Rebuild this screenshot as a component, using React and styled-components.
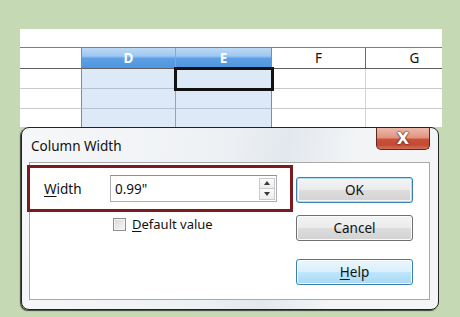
import React from 'react'
import styled, { createGlobalStyle } from 'styled-components'

const GlobalStyle = createGlobalStyle`
  html, body {
    margin: 0;
    padding: 0;
    background: #c5d9b4;
  }
  * { box-sizing: border-box; }
`

const Page = styled.div`
  width: 460px;
  height: 317px;
  padding-top: 29px;
  overflow: hidden;
  background: #c5d9b4;
  font-family: "Noto Sans", "DejaVu Sans", sans-serif;
`

const Sheet = styled.div`
  margin-left: 20px;
  width: 422px;
  height: 98px;
  overflow: hidden;
  background: #fff;
`

const TopBand = styled.div`
  height: 19px;
  border-bottom: 1px solid #7d7d7d;
`

const Grid = styled.div`
  display: grid;
  grid-template-columns: 62px 94px 96px 94px 98px;
  width: 444px;
`

const HeadCell = styled.div`
  height: 21px;
  display: flex;
  align-items: center;
  justify-content: center;
  font-family: "Noto Sans", sans-serif;
  font-size: 13.5px;
  border-bottom: 1px solid #5f5f5f;
  border-right: 1px solid ${p => p.$edge || '#8c8c8c'};
  color: ${p => p.$selected ? '#fff' : '#111'};
  font-weight: ${p => p.$selected ? 700 : 400};
  background: ${p => p.$selected
    ? 'linear-gradient(#bcdaf6 0%, #9ec8f0 40%, #5d9fe4 52%, #4f96df 100%)'
    : '#fff'};
`

const Cell = styled.div`
  height: 20px;
  border-bottom: 1px solid ${p => p.$selected ? '#b4c3d4' : '#cacaca'};
  border-right: 1px solid ${p => p.$edge || '#d4d4d4'};
  background: ${p => p.$selected ? '#dde9f7' : '#fff'};
  position: ${p => p.$active ? 'relative' : 'static'};
  z-index: ${p => p.$active ? 1 : 'auto'};
  outline: ${p => p.$active ? '3px solid #121212' : 'none'};
  outline-offset: -1px;
`

const Dialog = styled.div`
  margin-left: 21px;
  width: 418px;
  height: 183px;
  border: 1px solid #222;
  border-radius: 8px;
  box-shadow: -1px 1px 1px rgba(0, 0, 0, 0.7);
  background: linear-gradient(100deg, #f6f7f9 0%, #eef1f4 45%, #e3e8ee 60%, #f2f4f6 75%, #f4f5f7 100%);
  display: flex;
  flex-direction: column;
`

const TitleBar = styled.div`
  height: 34px;
  display: flex;
  justify-content: space-between;
  padding: 0 8px 0 9px;
`

const Title = styled.div`
  align-self: center;
  margin-top: 1px;
  font-size: 13.5px;
  color: #111;
`

const CloseButton = styled.div`
  width: 54px;
  height: 22px;
  display: flex;
  align-items: center;
  justify-content: center;
  border: 1px solid #5a2a22;
  border-top: none;
  border-radius: 0 0 5px 5px;
  background: linear-gradient(#eeb9ab 0%, #e09682 45%, #c9503a 55%, #c24a33 80%, #d4705a 100%);
  color: #fff;
  font-weight: 700;
  font-size: 16px;
  font-family: "DejaVu Sans", sans-serif;
  text-shadow: 0 0 2px #3a1510, 0 0 1px #3a1510;
`

const Panel = styled.div`
  margin: 0 8px 9px 7px;
  flex: 1;
  border: 1px solid #a9a9a9;
  background: #fff;
  display: flex;
  padding-top: 2px;
`

const LeftCol = styled.div`
  display: flex;
  flex-direction: column;
  margin-left: -3px;
`

const Highlight = styled.div`
  width: 266px;
  height: 47px;
  border: 3px solid #7c1b1d;
  display: flex;
  align-items: center;
  padding-left: 14px;
`

const Label = styled.div`
  width: 66px;
  font-size: 13.5px;
  color: #111;
`

const Input = styled.div`
  width: 167px;
  height: 27px;
  border: 1px solid #abadb3;
  border-top-color: #8e9196;
  display: flex;
  align-items: center;
  justify-content: space-between;
  padding: 0 1px 0 4px;
  font-size: 13.5px;
  color: #111;
`

const Spinner = styled.div`
  width: 16px;
  height: 22px;
  display: flex;
  flex-direction: column;
  border: 1px solid #c9cbce;
`

const SpinHalf = styled.div`
  flex: 1;
  display: flex;
  align-items: center;
  justify-content: center;
  background: linear-gradient(#fbfbfb, #eceded);
  border-top: ${p => p.$lower ? '1px solid #c9cbce' : 'none'};
`

const Arrow = styled.div`
  width: 0;
  height: 0;
  border-left: 3px solid transparent;
  border-right: 3px solid transparent;
  border-bottom: ${p => p.$down ? 'none' : '4px solid #3a3a3a'};
  border-top: ${p => p.$down ? '4px solid #3a3a3a' : 'none'};
`

const CheckRow = styled.div`
  display: flex;
  align-items: center;
  margin: 3px 0 0 86px;
  font-size: 13px;
  color: #111;
`

const Box = styled.div`
  width: 13px;
  height: 13px;
  margin-right: 6px;
  border: 1px solid #8e8f8f;
  background: linear-gradient(135deg, #d6d7d8, #f8f8f8);
  box-shadow: inset 0 0 0 1px #f4f4f4;
`

const ButtonCol = styled.div`
  display: flex;
  flex-direction: column;
  margin-left: 3px;
  padding-top: 12px;
`

const Button = styled.div`
  width: 117px;
  height: 26px;
  margin-top: ${p => p.$gap || 0}px;
  display: flex;
  align-items: center;
  justify-content: center;
  border-radius: 3px;
  font-size: 13.5px;
  color: #111;
  border: 1px solid ${p => p.$variant === 'normal' ? '#707070' : '#3c7fb1'};
  background: ${p => p.$variant === 'hover'
    ? 'linear-gradient(#eaf6fd 0%, #d9f0fc 50%, #bee6fd 51%, #a7d9f5 100%)'
    : 'linear-gradient(#f4f4f4 0%, #ebebeb 50%, #dddddd 51%, #d2d2d2 100%)'};
  box-shadow: ${p => p.$variant === 'default'
    ? 'inset 0 0 0 1px #aedcf4, inset 0 0 0 2px #f6f6f6'
    : 'inset 0 0 0 1px #fbfbfb'};
`

const Key = styled.span`
  text-decoration: underline;
  text-underline-offset: 2px;
`

const columns = [
  { name: '', selected: false, edge: '#5b93d3' },
  { name: 'D', selected: true, edge: '#8aa6c4' },
  { name: 'E', selected: true, edge: '#5b93d3' },
  { name: 'F', selected: false, edge: '#6a6a6a' },
  { name: 'G', selected: false }
]

function App() {
  const rows = [0, 1, 2]
  return (
    <Page>
      <GlobalStyle />
      <Sheet>
        <TopBand />
        <Grid>
          {columns.map((c, i) => (
            <HeadCell key={'h' + i} $selected={c.selected} $edge={c.edge}>{c.name}</HeadCell>
          ))}
          {rows.map(r => columns.map((c, i) => (
            <Cell
              key={r + '-' + i}
              $selected={c.selected}
              $edge={i === 3 ? '#d4d4d4' : c.edge}
              $active={r === 0 && c.name === 'E'}
            />
          )))}
        </Grid>
      </Sheet>

      <Dialog>
        <TitleBar>
          <Title>Column Width</Title>
          <CloseButton>X</CloseButton>
        </TitleBar>
        <Panel>
          <LeftCol>
            <Highlight>
              <Label><Key>W</Key>idth</Label>
              <Input>
                0.99"
                <Spinner>
                  <SpinHalf><Arrow /></SpinHalf>
                  <SpinHalf $lower><Arrow $down /></SpinHalf>
                </Spinner>
              </Input>
            </Highlight>
            <CheckRow>
              <Box />
              <span><Key>D</Key>efault value</span>
            </CheckRow>
          </LeftCol>
          <ButtonCol>
            <Button $variant="default">OK</Button>
            <Button $variant="normal" $gap={12}>Cancel</Button>
            <Button $variant="hover" $gap={18}><span><Key>H</Key>elp</span></Button>
          </ButtonCol>
        </Panel>
      </Dialog>
    </Page>
  )
}

export default App
